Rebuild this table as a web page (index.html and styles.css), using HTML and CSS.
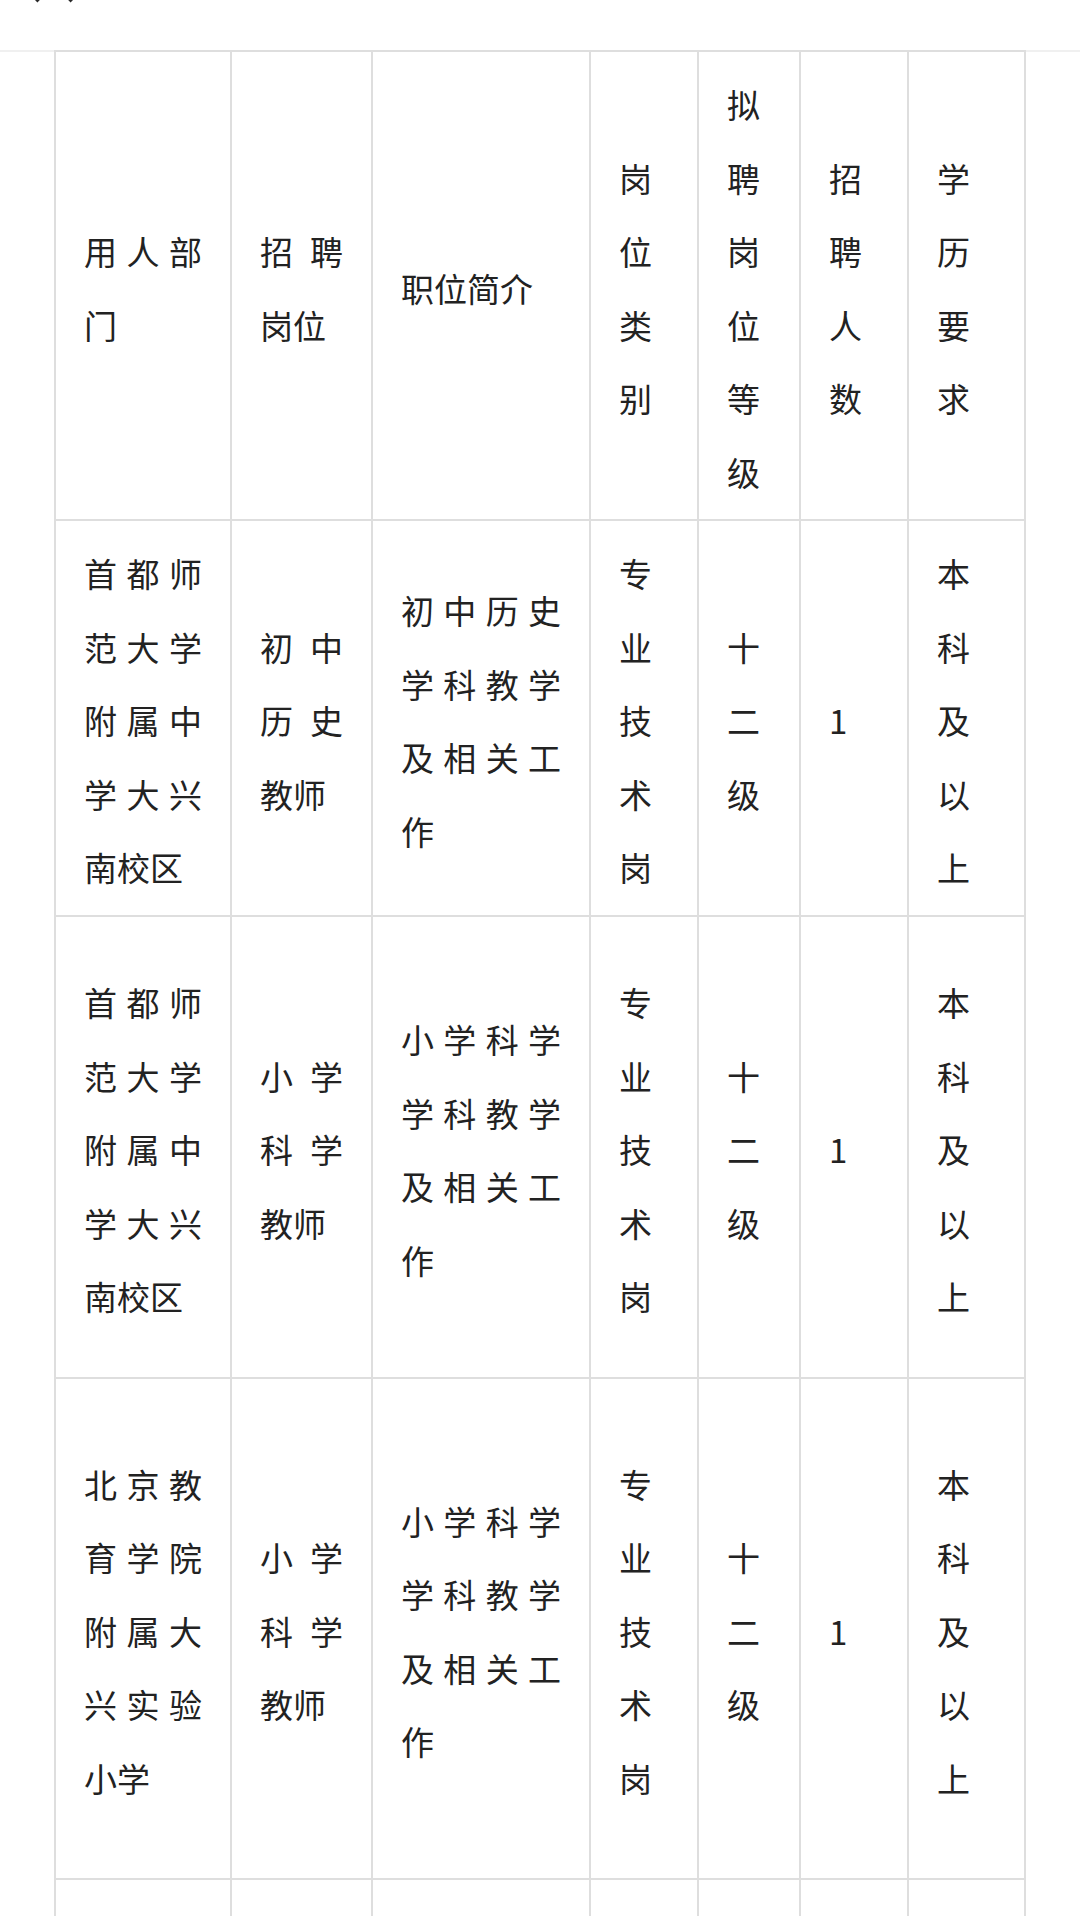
FILE: index.html
```html
<!DOCTYPE html>
<html lang="zh-CN">
<head>
<meta charset="utf-8">
<title>招聘岗位</title>
<link rel="stylesheet" href="styles.css">
</head>
<body>
<div class="topbar">
  <svg class="close-icon" width="44" height="44" viewBox="0 0 44 44" aria-hidden="true">
    <path d="M4 4 L40 40 M40 4 L4 40" stroke="#2a2a2a" stroke-width="4" stroke-linecap="butt" fill="none"/>
  </svg>
</div>
<table class="jobs">
  <colgroup>
    <col class="c1"><col class="c2"><col class="c3"><col class="c4"><col class="c5"><col class="c6"><col class="c7">
  </colgroup>
  <tbody>
    <tr class="r-head">
      <td>用人部门</td>
      <td>招聘岗位</td>
      <td>职位简介</td>
      <td>岗位类别</td>
      <td>拟聘岗位等级</td>
      <td>招聘人数</td>
      <td>学历要求</td>
    </tr>
    <tr class="r1">
      <td>首都师范大学附属中学大兴南校区</td>
      <td>初中历史教师</td>
      <td>初中历史学科教学及相关工作</td>
      <td>专业技术岗</td>
      <td>十二级</td>
      <td>1</td>
      <td>本科及以上</td>
    </tr>
    <tr class="r2">
      <td>首都师范大学附属中学大兴南校区</td>
      <td>小学科学教师</td>
      <td>小学科学学科教学及相关工作</td>
      <td>专业技术岗</td>
      <td>十二级</td>
      <td>1</td>
      <td>本科及以上</td>
    </tr>
    <tr class="r3">
      <td>北京教育学院附属大兴实验小学</td>
      <td>小学科学教师</td>
      <td>小学科学学科教学及相关工作</td>
      <td>专业技术岗</td>
      <td>十二级</td>
      <td>1</td>
      <td>本科及以上</td>
    </tr>
    <tr class="r4">
      <td></td><td></td><td></td><td></td><td></td><td></td><td></td>
    </tr>
  </tbody>
</table>
</body>
</html>
```

FILE: styles.css
```css
html, body {
  margin: 0;
  padding: 0;
  background: #ffffff;
}
body {
  width: 1080px;
  height: 1916px;
  overflow: hidden;
  font-family: "Noto Sans CJK SC", "Noto Sans", sans-serif;
  color: #222222;
}
.topbar {
  height: 50px;
  border-bottom: 2px solid #f0f0f0;
  display: flex;
  align-items: flex-end;
  overflow: hidden;
}
.close-icon {
  display: block;
  margin-left: 32px;
  margin-bottom: 45px;
  flex: none;
}
.jobs {
  margin-top: -2px;
  margin-left: 54px;
  width: 972px;
  table-layout: fixed;
  border-collapse: collapse;
  font-size: 33px;
  line-height: 73.5px;
}
.c1 { width: 176px; }
.c2 { width: 141px; }
.c3 { width: 218px; }
.c4 { width: 108px; }
.c5 { width: 102px; }
.c6 { width: 108px; }
.c7 { width: 117px; }
.jobs td {
  border: 2px solid #dedede;
  padding: 16px 28px 10px;
  vertical-align: middle;
  text-align: justify;
  word-break: break-all;
}
.r-head { height: 469px; }
.r1 { height: 396px; }
.r2 { height: 462px; }
.r3 { height: 501px; }
.r4 { height: 300px; }
```
